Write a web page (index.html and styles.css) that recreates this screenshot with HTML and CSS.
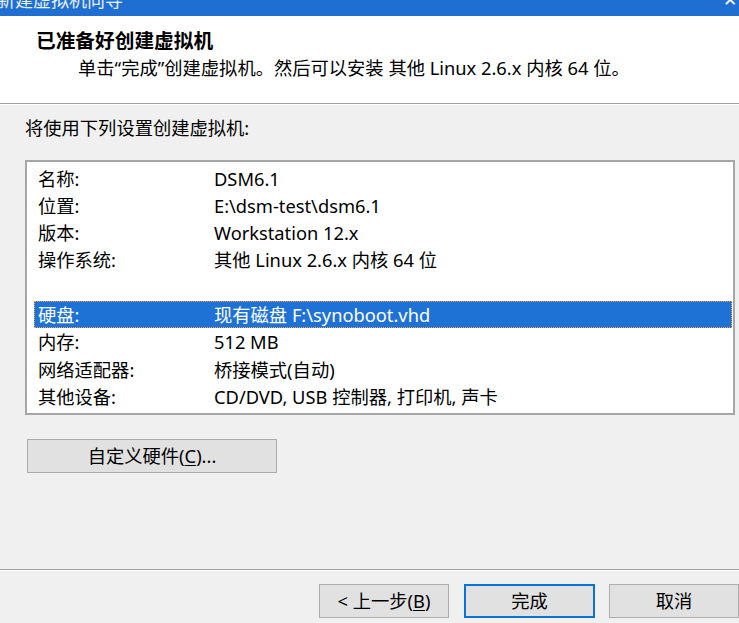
FILE: index.html
```html
<!DOCTYPE html>
<html lang="zh-CN">
<head>
<meta charset="utf-8">
<title>新建虚拟机向导</title>
<link rel="stylesheet" href="styles.css">
</head>
<body>
<div class="window">
  <div class="titlebar">
    <span class="title-text">新建虚拟机向导</span>
    <span class="close">✕</span>
  </div>
  <div class="header">
    <div class="header-title">已准备好创建虚拟机</div>
    <div class="header-sub">单击“完成”创建虚拟机。然后可以安装 其他 Linux 2.6.x 内核 64 位。</div>
  </div>
  <div class="body">
    <div class="intro">将使用下列设置创建虚拟机:</div>
    <div class="listbox">
      <div class="row"><span>名称:</span><span>DSM6.1</span></div>
      <div class="row"><span>位置:</span><span>E:\dsm-test\dsm6.1</span></div>
      <div class="row"><span>版本:</span><span>Workstation 12.x</span></div>
      <div class="row"><span>操作系统:</span><span>其他 Linux 2.6.x 内核 64 位</span></div>
      <div class="row"><span></span><span></span></div>
      <div class="row selected"><span>硬盘:</span><span>现有磁盘 F:\synoboot.vhd</span></div>
      <div class="row"><span>内存:</span><span>512 MB</span></div>
      <div class="row"><span>网络适配器:</span><span>桥接模式(自动)</span></div>
      <div class="row"><span>其他设备:</span><span>CD/DVD, USB 控制器, 打印机, 声卡</span></div>
    </div>
    <button class="btn custom">自定义硬件(<u>C</u>)...</button>
  </div>
  <div class="footer">
    <button class="btn">&lt; 上一步(<u>B</u>)</button>
    <button class="btn default">完成</button>
    <button class="btn">取消</button>
  </div>
</div>
</body>
</html>
```
FILE: styles.css
```css
* { box-sizing: border-box; }
html, body {
  margin: 0;
  padding: 0;
  width: 739px;
  height: 623px;
  overflow: hidden;
  background: #f0f0f0;
}
body {
  font-family: "Noto Sans", "Noto Sans CJK SC", sans-serif;
  font-size: 18.3px;
  color: #000;
}
.window {
  display: flex;
  flex-direction: column;
  width: 739px;
  height: 623px;
}
.titlebar {
  height: 16px;
  flex: none;
  background: #1f6fd3;
  color: #fff;
  display: flex;
  justify-content: space-between;
  overflow: hidden;
}
.title-text {
  font-size: 18px;
  line-height: 20px;
  margin-top: -10px;
  margin-left: -3px;
  color: #e8f0fb;
}
.close {
  font-size: 17px;
  line-height: 20px;
  margin-top: -10px;
  margin-right: 2px;
}
.header {
  flex: none;
  height: 88px;
  background: #fff;
  padding: 12px 0 0 36px;
  border-bottom: 1px solid #a0a0a0;
  box-shadow: 0 1px 0 #fff;
}
.header-title {
  font-weight: bold;
  font-size: 19.7px;
  line-height: 26px;
}
.header-sub {
  margin-top: 1px;
  padding-left: 42px;
  line-height: 26px;
}
.body {
  flex: 1;
  padding: 11px 0 0 0;
}
.intro {
  padding-left: 25px;
  line-height: 26px;
  margin-bottom: 19px;
}
.listbox {
  margin-left: 25px;
  width: 710px;
  height: 255px;
  background: #fff;
  border: 2px solid #a6a6a6;
  padding: 2.5px 1px 2px 7px;
}
.row {
  display: grid;
  grid-template-columns: 176px 1fr;
  height: 27.3px;
  line-height: 26px;
  padding-left: 3px;
  border: 1px solid transparent;
  white-space: nowrap;
}
.row.selected {
  background: #1f72d5;
  color: #fff;
  border: 1px dotted #f0a24c;
}
.btn {
  font-family: inherit;
  font-size: 18.3px;
  color: #000;
  background: #e1e1e1;
  border: 1px solid #adadad;
  height: 34px;
  padding: 0;
  line-height: 30px;
  flex: none;
}
.btn u { text-decoration-thickness: 1px; text-underline-offset: 2px; }
.custom {
  display: block;
  margin: 24px 0 0 27px;
  width: 250px;
}
.footer {
  flex: none;
  height: 54px;
  border-top: 1px solid #a0a0a0;
  box-shadow: inset 0 1px 0 #fff;
  display: flex;
  gap: 15px;
  padding: 14px 0 0 319px;
  overflow: hidden;
}
.footer .btn { width: 130px; }
.footer .btn.default {
  width: 131px;
  border: 2px solid #0a74d6;
  margin-right: -1px;
}
```
